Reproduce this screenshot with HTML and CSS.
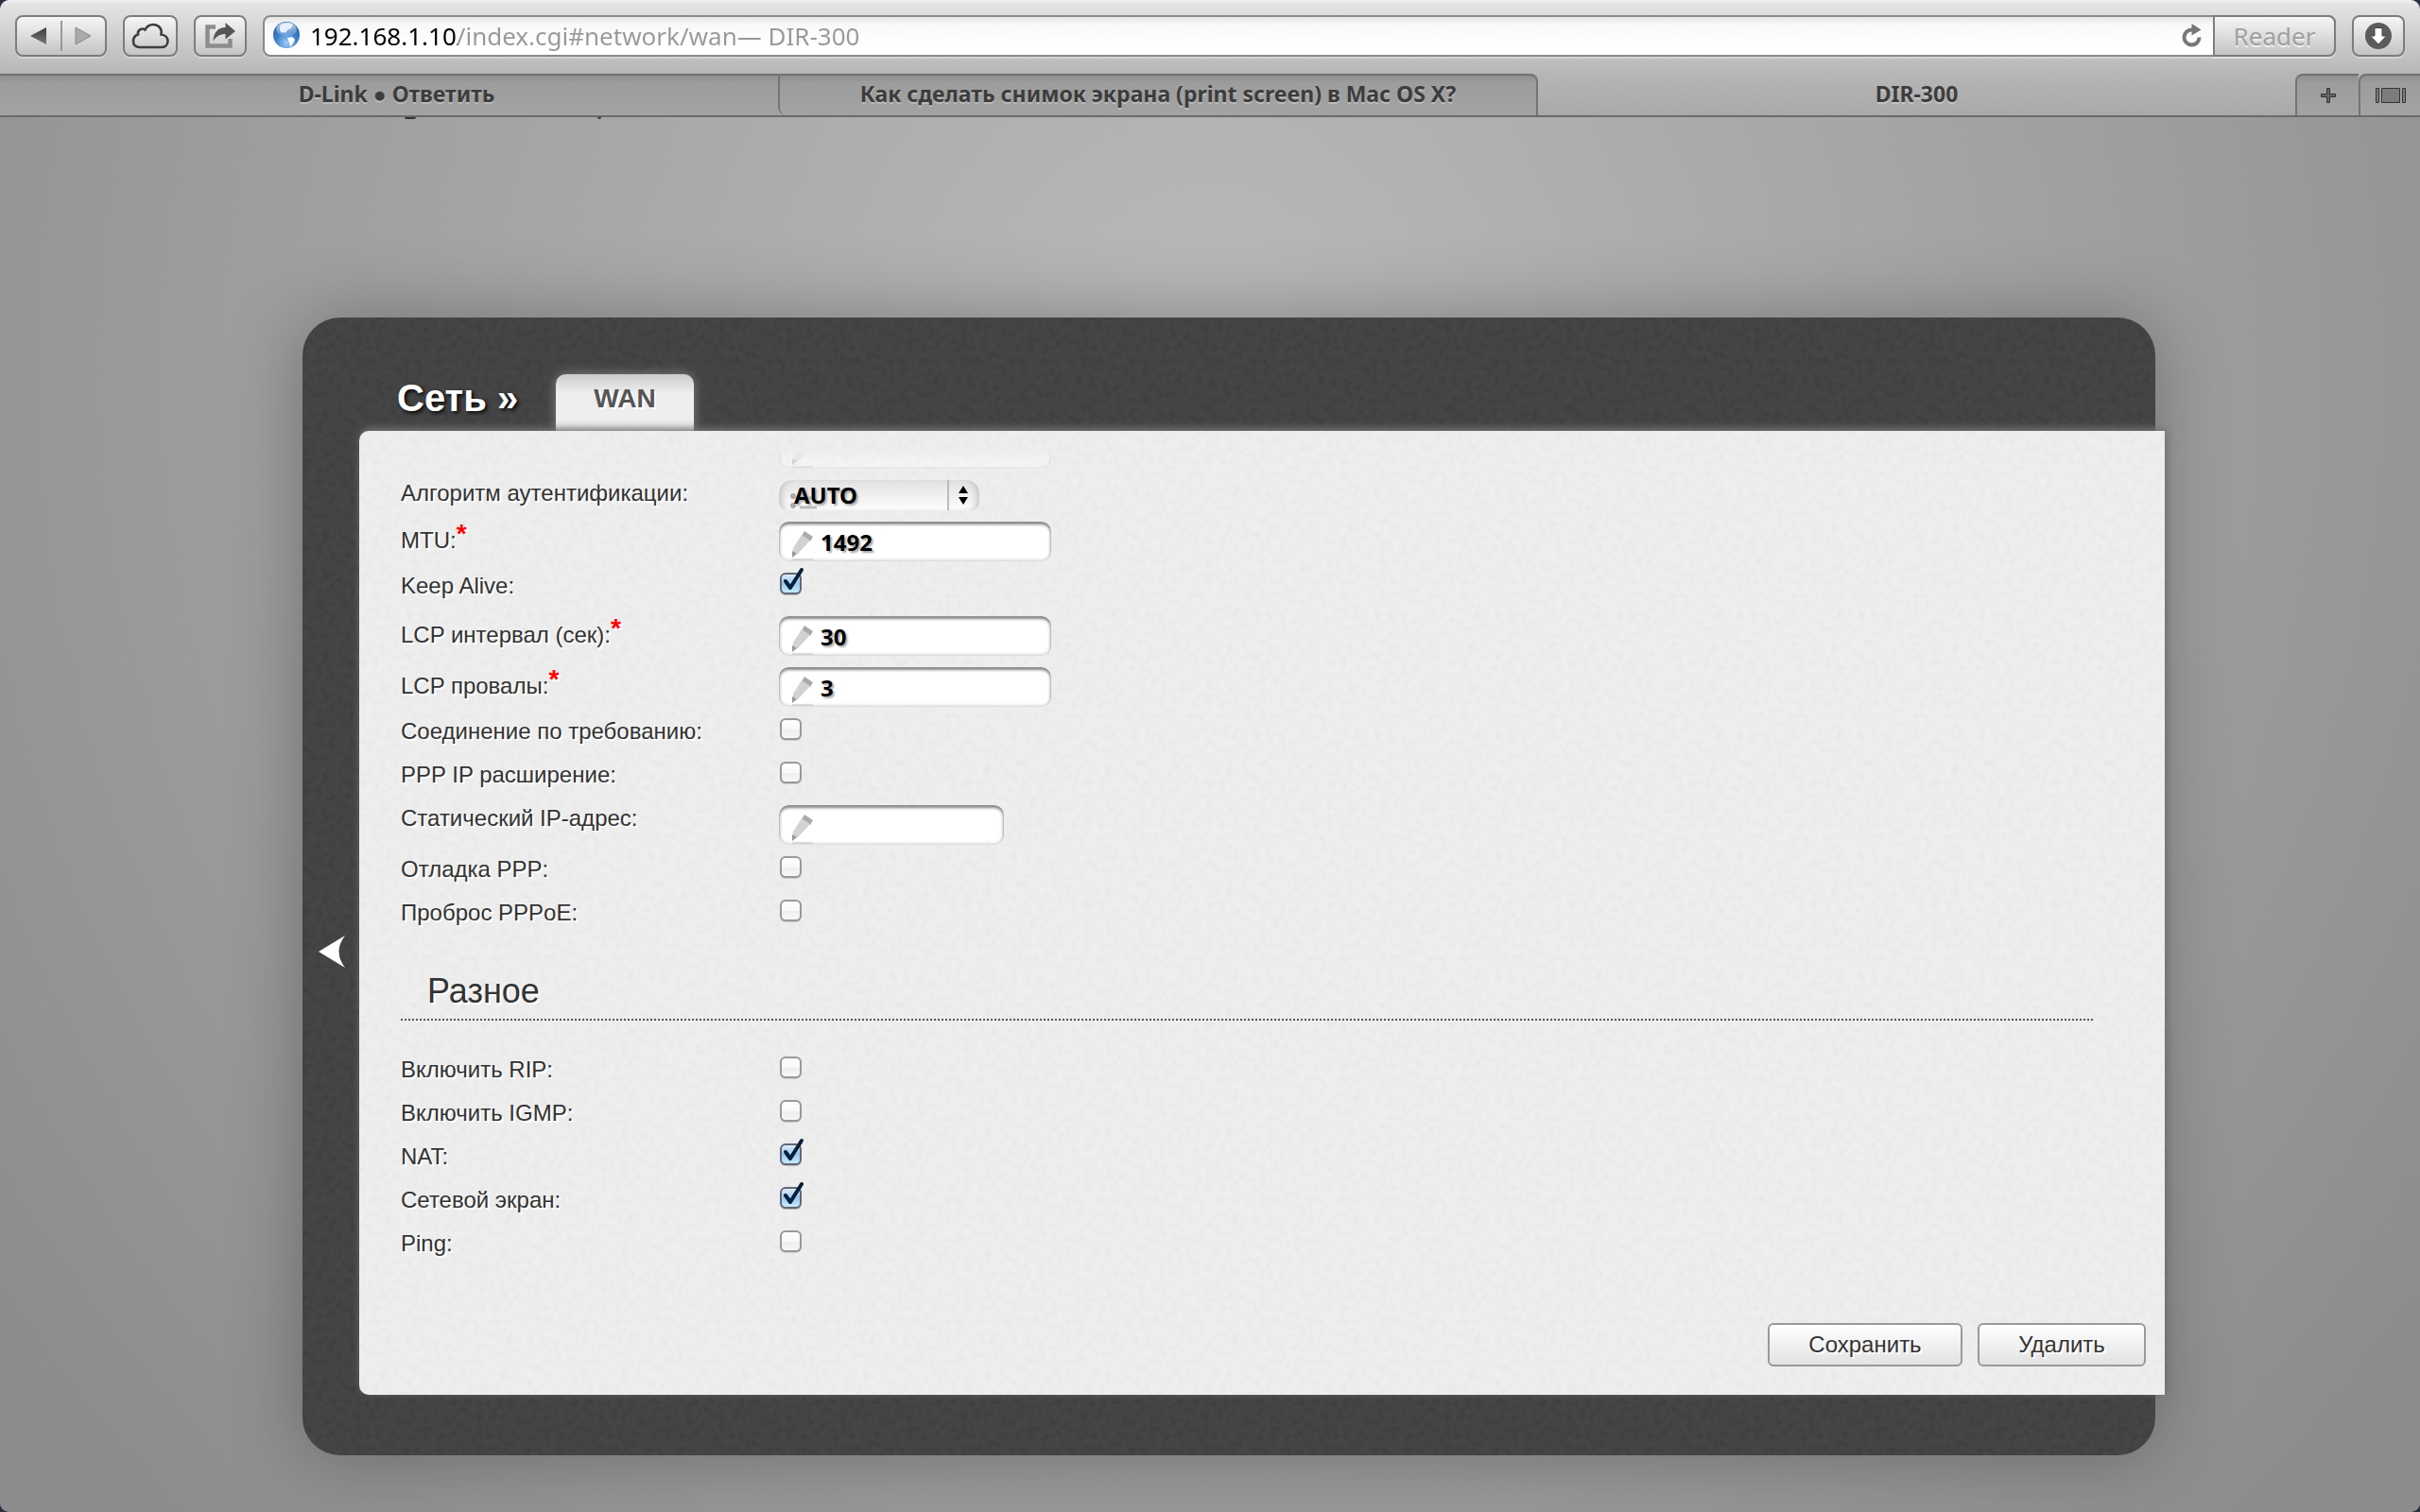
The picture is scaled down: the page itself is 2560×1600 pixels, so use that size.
FILE: index.html
```
<!DOCTYPE html>
<html lang="ru">
<head>
<meta charset="utf-8">
<meta name="viewport" content="width=device-width, initial-scale=1">
<title>DIR-300</title>
<link rel="stylesheet" href="styles.css">
</head>
<body>
<div class="window">
  <header class="chrome">
    <div class="toolbar">
      <div class="nav-pair">
        <button class="nav-btn" aria-label="Назад"><svg width="18" height="20" viewBox="0 0 18 20"><defs><linearGradient id="tri" x1="0" y1="0" x2="0" y2="1"><stop offset="0" stop-color="#3a3a3a"/><stop offset="1" stop-color="#7a7a7a"/></linearGradient></defs><path d="M0 10L17 1v18z" fill="url(#tri)"/></svg></button>
        <button class="nav-btn nav-next" aria-label="Вперёд"><svg width="18" height="20" viewBox="0 0 18 20"><path d="M17 10L1 1v18z" fill="#aaa" stroke="#888"/></svg></button>
      </div>
      <button class="tool-btn cloud" aria-label="iCloud"><svg width="40" height="28" viewBox="0 0 40 28"><path d="M9 26C4 26 2 23 2 19.500C2 16 4 13.500 7 12.500C6 8 11 5 14.500 7.500C16.500 3.500 20 2 23 2C29 2 33 7 31.500 12.500C36 13 38.500 16 38.500 19.500C38.500 23 36 26 32 26Z" fill="none" stroke="#3e3e3e" stroke-width="2.600"/></svg></button>
      <button class="tool-btn share" aria-label="Поделиться"><svg width="34" height="30" viewBox="0 0 34 30"><path d="M12 5.500H3.500V25.500H27.500V18" fill="none" stroke="#8c8c8c" stroke-width="4.500"/><path d="M9.500 20.500C10 11 15 6 22.500 6V1L33 10L22.500 18.500V13C17 13 13 15 9.500 20.500Z" fill="#555"/></svg></button>
      <div class="address">
        <svg class="globe" width="30" height="30" viewBox="0 0 30 30"><defs><radialGradient id="sea" cx=".5" cy=".8" r=".8"><stop offset="0" stop-color="#9fcef8"/><stop offset=".5" stop-color="#3f7fcb"/><stop offset="1" stop-color="#2560ab"/></radialGradient><linearGradient id="shine" x1="0" y1="0" x2="0" y2="1"><stop offset="0" stop-color="#fff" stop-opacity=".7"/><stop offset="1" stop-color="#fff" stop-opacity=".1"/></linearGradient></defs><circle cx="15" cy="15" r="14" fill="url(#sea)"/><ellipse cx="15" cy="9" rx="11" ry="7.500" fill="url(#shine)"/><path d="M8 5C12 2 18 1 22 4L20 8L16 10L14 13L12 12L10 13L8 10Z" fill="#e4f0fb"/><path d="M16 18L21 17L24 20L22 24L19 28L18 23Z" fill="#fff"/></svg>
        <input class="url" type="text" aria-label="Адрес" value="192.168.1.10/index.cgi#network/wan— DIR-300">
        <button class="reload" aria-label="Обновить"><svg width="22" height="26" viewBox="0 0 22 26"><path d="M11 6.500A8 8 0 1 0 18.500 14.500" fill="none" stroke="#777" stroke-width="4"/><path d="M10.500 0V12.500L20.500 6.500Z" fill="#777"/></svg></button>
        <button class="reader">Reader</button>
      </div>
      <button class="tool-btn downloads" aria-label="Загрузки"><svg width="30" height="30" viewBox="0 0 30 30"><circle cx="15" cy="15" r="14" fill="#5c5c5c"/><path d="M11 6.500H19V15H23.500L15 24L6.500 15H11Z" fill="#fff" stroke="#444"/></svg></button>
    </div>
    <nav class="tabs">
      <a class="tab tab-first" href="#dlink">D-Link ● Ответить</a>
      <a class="tab tab-second" href="#macos">Как сделать снимок экрана (print screen) в Mac OS X?</a>
      <a class="tab tab-active" href="#network/wan">DIR-300</a>
      <button class="tab tab-tool" aria-label="Новая вкладка"><svg width="18" height="18" viewBox="0 0 18 18"><path d="M7.500 1.500h3v6h6v3h-6v6h-3v-6h-6v-3h6z" fill="#666" stroke="#333"/></svg></button>
      <button class="tab tab-tool" aria-label="Все вкладки"><svg width="34" height="18" viewBox="0 0 34 18"><path d="M1.500 1.500h3v15h-3zM7.500 1.500h19v15h-19zM29.500 1.500h3v15h-3z" fill="#7c7c7c" stroke="#333"/></svg></button>
    </nav>
  </header>

  <main class="page">
    <div class="scrolled-title" aria-hidden="true"><i class="descender"></i><i class="descender descender-narrow"></i></div>
    <section class="router">
      <div class="router-head">
        <h1 class="section-name">Сеть »</h1>
        <a class="section-tab" href="#network/wan">WAN</a>
      </div>
      <div class="router-body">
        <button class="collapse" aria-label="Свернуть меню"><svg width="30" height="36" viewBox="0 0 30 36"><path d="M1 18L29 1Q16 18 29 35Z" fill="#fff"/></svg></button>
        <form class="panel">
          <div class="fields">
            <div class="cut-row"><input class="text-input" type="text" aria-label="Предыдущее поле"></div>
            <div class="row row-select"><label for="auth">Алгоритм аутентификации:</label><select id="auth" class="select"><option>AUTO</option></select></div>
            <div class="row row-text required"><label for="mtu">MTU:<sup>*</sup></label><input id="mtu" class="text-input" type="text" value="1492"></div>
            <div class="row"><label for="keep">Keep Alive:</label><input id="keep" class="check" type="checkbox" checked></div>
            <div class="row row-text required"><label for="lcpi">LCP интервал (сек):<sup>*</sup></label><input id="lcpi" class="text-input" type="text" value="30"></div>
            <div class="row row-text required"><label for="lcpf">LCP провалы:<sup>*</sup></label><input id="lcpf" class="text-input" type="text" value="3"></div>
            <div class="row"><label for="demand">Соединение по требованию:</label><input id="demand" class="check" type="checkbox"></div>
            <div class="row"><label for="pppip">PPP IP расширение:</label><input id="pppip" class="check" type="checkbox"></div>
            <div class="row row-text"><label for="static">Статический IP-адрес:</label><input id="static" class="text-input text-input-short" type="text"></div>
            <div class="row"><label for="debug">Отладка PPP:</label><input id="debug" class="check" type="checkbox"></div>
            <div class="row"><label for="pppoe">Проброс PPPoE:</label><input id="pppoe" class="check" type="checkbox"></div>
            <h2 class="group-title">Разное</h2>
            <div class="row"><label for="rip">Включить RIP:</label><input id="rip" class="check" type="checkbox"></div>
            <div class="row"><label for="igmp">Включить IGMP:</label><input id="igmp" class="check" type="checkbox"></div>
            <div class="row"><label for="nat">NAT:</label><input id="nat" class="check" type="checkbox" checked></div>
            <div class="row"><label for="fw">Сетевой экран:</label><input id="fw" class="check" type="checkbox" checked></div>
            <div class="row"><label for="ping">Ping:</label><input id="ping" class="check" type="checkbox"></div>
          </div>
          <div class="actions">
            <button class="action action-save" type="button">Сохранить</button>
            <button class="action action-delete" type="button">Удалить</button>
          </div>
        </form>
      </div>
    </section>
  </main>
</div>
</body>
</html>
```
FILE: styles.css
```
* { box-sizing: border-box; }
html { background: #2c3040; }
body { margin: 0; font-family: "Liberation Sans", Arial, sans-serif; font-size: 24px; line-height: 28px; color: #333; }
button, input, select { font: inherit; margin: 0; padding: 0; border: 0; background: none; color: inherit; }
svg { display: block; }
a { color: inherit; text-decoration: none; }

.window { display: flex; flex-direction: column; min-height: 100vh; border-radius: 10px; overflow: hidden; background: #999; }

/* Browser chrome */
.chrome { font-family: "Noto Sans", "Open Sans", sans-serif; background: linear-gradient(#f2f2f2 0, #e4e4e4 4px, #b6b6b6 78px, #a9a9a9 122px); }
.toolbar { display: flex; align-items: center; gap: 17px; height: 78px; padding: 0 16px 2px; }
.nav-pair, .tool-btn, .reader { border: 2px solid #7d7d7d; border-radius: 8px; background: linear-gradient(#f6f6f6, #c4c4c4); box-shadow: 0 2px 0 rgba(255,255,255,.3); }
.nav-pair { display: flex; align-items: center; width: 97px; height: 44px; }
.nav-btn { flex: 1; display: flex; align-items: center; justify-content: center; height: 32px; }
.nav-next { border-left: 2px solid #999; }
.tool-btn { display: flex; align-items: center; justify-content: center; width: 56px; height: 44px; }
.cloud { width: 58px; }
.address { flex: 1; display: flex; align-items: center; height: 44px; border: 2px solid #8a8a8a; border-radius: 8px; background: linear-gradient(#e6e6e6, #f8f8f8 8px, #fff 30px); box-shadow: 0 2px 0 rgba(255,255,255,.3); }
.globe { margin: 0 10px 2px 8px; }
.url { flex: 1; min-width: 0; height: 36px; font-size: 26px; background: linear-gradient(90deg, #000 156px, #999 156px); -webkit-background-clip: text; background-clip: text; -webkit-text-fill-color: transparent; }
.reload { margin-right: 13px; }
.reader { align-self: stretch; width: 130px; margin: -2px; border-radius: 0 8px 8px 0; font-size: 26px; color: #a0a0a0; text-shadow: 0 2px 0 #eee; }

.tabs { display: grid; grid-template-columns: 823fr 804fr 801fr 67px 65px; height: 46px; border-bottom: 2px solid #6a6a6a; font-size: 23px; font-weight: bold; color: #3c3c3c; }
.tab { display: flex; align-items: center; justify-content: center; padding-bottom: 4px; text-shadow: 0 2px 0 rgba(255,255,255,.3); white-space: nowrap; border-top: 2px solid #707070; background: linear-gradient(#8f8f8f, #9d9d9d 8px, #a3a3a3); }
.tab-first { padding-left: 16px; }
.tab-second { border-left: 2px solid #747474; border-right: 2px solid #747474; border-radius: 0 8px 0 8px; }
.tab-active { border-top: 0; padding-bottom: 2px; background: none; }
.tab-tool { padding-bottom: 0; border-left: 2px solid #747474; border-radius: 8px 0 0 0; }

/* Router page */
.page { flex: 1; padding: 0 280px 60px 320px; background: radial-gradient(ellipse 1600px 1700px at 50% 18%, #bababa, #9d9d9d 65%, #8c8c8c); }
.scrolled-title { display: flex; gap: 192px; height: 212px; padding-left: 108px; }
.descender { width: 12px; height: 2px; border-radius: 0 0 6px 6px; background: #333; }
.descender-narrow { width: 4px; }
.router { padding: 60px 0 64px; border-radius: 40px; background: #454545 url("data:image/svg+xml,%3Csvg xmlns='http://www.w3.org/2000/svg' width='128' height='128'%3E%3Cfilter id='n' x='0' y='0' width='1' height='1'%3E%3CfeTurbulence type='fractalNoise' baseFrequency='.14' numOctaves='2' stitchTiles='stitch'/%3E%3CfeColorMatrix values='0 0 0 0 0 0 0 0 0 0 0 0 0 0 0 .24 0 0 0 -.1'/%3E%3C/filter%3E%3Crect width='128' height='128' filter='url(%23n)'/%3E%3C/svg%3E"); box-shadow: 0 0 80px rgba(0,0,0,.3); }
.router-head { display: flex; height: 60px; padding-left: 100px; }
.section-name { width: 168px; margin: 0; font-size: 40px; line-height: 50px; color: #fff; white-space: nowrap; text-shadow: 2px 2px 4px #000; }
.section-tab { width: 146px; border-radius: 10px 10px 0 0; background: linear-gradient(#ccc, #eee 20px); box-shadow: 0 0 12px #858585; font-size: 28px; line-height: 52px; font-weight: bold; text-align: center; color: #555; text-shadow: 2px 2px 0 #fff; }
.router-body { display: flex; align-items: flex-start; }
.collapse { width: 60px; padding: 533px 13px 0 16px; }
.panel { flex: 1; margin-right: -10px; padding: 20px 20px 30px 44px; border-radius: 10px 0 0 10px; background: #eee url("data:image/svg+xml,%3Csvg xmlns='http://www.w3.org/2000/svg' width='128' height='128'%3E%3Cfilter id='n' x='0' y='0' width='1' height='1'%3E%3CfeTurbulence type='fractalNoise' baseFrequency='.14' numOctaves='2' stitchTiles='stitch'/%3E%3CfeColorMatrix values='0 0 0 0 0 0 0 0 0 0 0 0 0 0 0 .05 0 0 0 -.02'/%3E%3C/filter%3E%3Crect width='128' height='128' filter='url(%23n)'/%3E%3C/svg%3E"); box-shadow: 0 -4px 10px -2px #777, 2px 0 10px -2px #666; }
.fields { padding-right: 56px; text-shadow: 2px 2px 0 #fff; }
.row { display: grid; grid-template-columns: 400px 1fr; align-items: start; justify-items: start; height: 46px; }
.row-text { height: 54px; }
.row-select { height: 44px; }
.required label { padding-top: 6px; }
sup { font-size: 28px; line-height: 0; vertical-align: 6px; font-weight: bold; color: #f00; }

.cut-row { display: flex; flex-direction: column; justify-content: flex-end; height: 20px; margin: 0 0 12px 400px; overflow: hidden; opacity: .5; -webkit-mask-image: linear-gradient(transparent, #000); mask-image: linear-gradient(transparent, #000); }
.cut-row .text-input { flex: none; }
.text-input, .select { font-family: "Noto Sans", "Open Sans", sans-serif; font-weight: bold; color: #000; text-shadow: 2px 2px 2px #aaa; }
.text-input { width: 288px; height: 42px; padding: 0 12px 0 44px; border-radius: 10px; box-shadow: inset 0 3px 3px #8a8a8a, inset 0 0 4px #aaa; background: #fff url("data:image/svg+xml,%3Csvg xmlns='http://www.w3.org/2000/svg' width='26' height='32'%3E%3Cpath d='M15 1l9 6-3 5-9-6z' fill='%23aaa'/%3E%3Cpath d='M12 5l9 6L8 25l-6 1 1-7z' fill='%23d2d2d2'/%3E%3Cpath d='M2 22l5 3-5 4z' fill='%23999'/%3E%3Cpath d='M2 31h22' stroke='%23e2e2e2' stroke-width='2'/%3E%3C/svg%3E") 12px 9px no-repeat; }
.text-input-short { width: 238px; }
.select { appearance: none; width: 212px; height: 32px; padding: 0 46px 0 16px; border-radius: 14px 14px 8px 8px; line-height: 32px; box-shadow: inset 8px 0 8px -6px #bbb, inset -8px 0 8px -6px #bbb; background: url("data:image/svg+xml,%3Csvg xmlns='http://www.w3.org/2000/svg' width='212' height='32'%3E%3Cpath d='M179 0v32' stroke='%23bbb' stroke-width='2'/%3E%3Cpath d='M190 14l5-8 5 8zM190 18l5 8 5-8z'/%3E%3Ccircle cx='15' cy='17' r='3' fill='%23aaa'/%3E%3Ccircle cx='15' cy='27' r='3' fill='%23aaa'/%3E%3Cpath d='M22 19h18M22 29h18' stroke='%23bbb' stroke-width='3'/%3E%3C/svg%3E") no-repeat, linear-gradient(#e2e2e2, #fdfdfd); }
.check { appearance: none; width: 30px; height: 32px; margin-top: -7px; background: url("data:image/svg+xml,%3Csvg xmlns='http://www.w3.org/2000/svg' width='30' height='32'%3E%3ClinearGradient id='g' x2='0' y2='1'%3E%3Cstop stop-color='%23fff'/%3E%3Cstop offset='.5' stop-color='%23f8f8f8'/%3E%3Cstop offset='.55' stop-color='%23eee'/%3E%3Cstop offset='1' stop-color='%23f8f8f8'/%3E%3C/linearGradient%3E%3Crect x='1' y='8' width='23' height='23' rx='6' fill='%23ccc'/%3E%3Crect x='2' y='8' width='21' height='21' rx='5' fill='url(%23g)' stroke='%23999' stroke-width='2'/%3E%3C/svg%3E") no-repeat; }
.check:checked { background-image: url("data:image/svg+xml,%3Csvg xmlns='http://www.w3.org/2000/svg' width='30' height='32'%3E%3ClinearGradient id='g' x2='0' y2='1'%3E%3Cstop stop-color='%23e4f0fc'/%3E%3Cstop offset='.5' stop-color='%2398c8f2'/%3E%3Cstop offset='1' stop-color='%23c8f0ff'/%3E%3C/linearGradient%3E%3Crect x='1' y='8' width='23' height='23' rx='6' fill='%23bbb'/%3E%3Crect x='2' y='8' width='21' height='21' rx='5' fill='url(%23g)' stroke='%23667' stroke-width='2'/%3E%3Cpath d='M7 16l5 7L24 4' fill='none' stroke='%2306203c' stroke-width='4' stroke-linecap='round' stroke-linejoin='round'/%3E%3C/svg%3E"); }
.group-title { margin: 30px 0 38px; padding: 0 0 8px 28px; border-bottom: 2px dotted #555; font-size: 36px; line-height: 42px; font-weight: normal; }
.actions { display: flex; justify-content: flex-end; gap: 16px; margin-top: 52px; }
.action { height: 46px; border: 2px solid #999; border-radius: 6px; background: linear-gradient(#fff, #e2e2e2); text-shadow: 2px 2px 0 #fff; }
.action-save { width: 206px; }
.action-delete { width: 178px; }
```
